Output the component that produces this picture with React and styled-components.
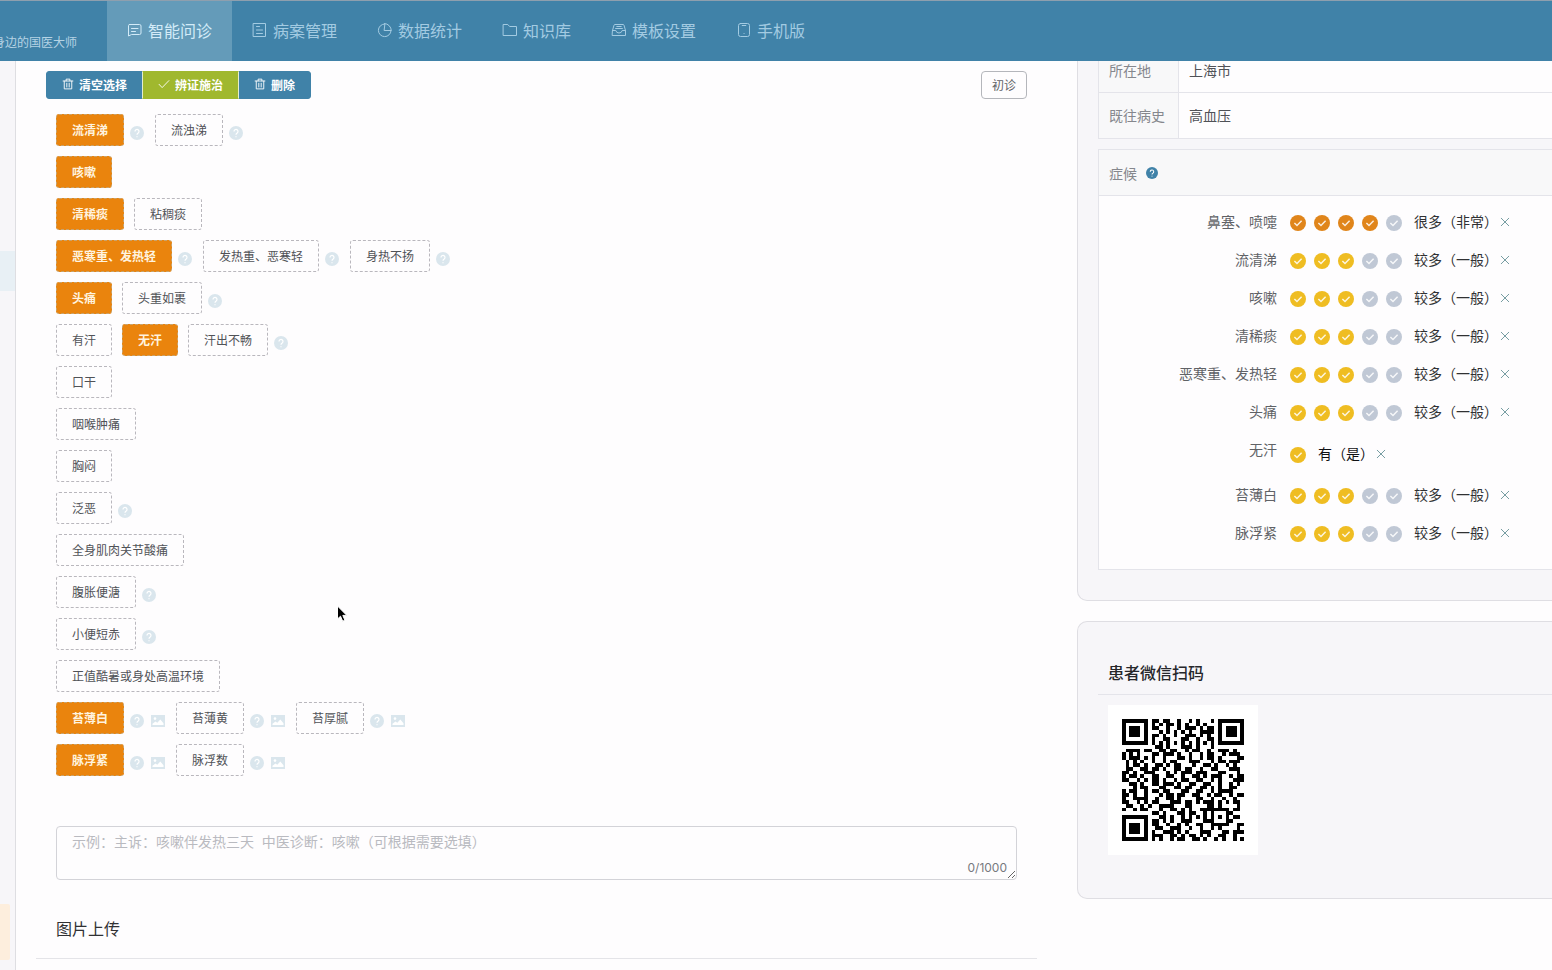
import React, { useState } from 'react';
import styled, { createGlobalStyle } from 'styled-components';

// styles
const GlobalStyle = createGlobalStyle`
  * {
    box-sizing: border-box;
  }
  body {
    margin: 0;
    background: #fefdfe;
    color: #303133;
    font-family: Inter, "Noto Sans CJK SC", sans-serif;
    font-size: 14px;
  }
  button, textarea {
    font-family: inherit;
    margin: 0;
  }
  svg {
    display: block;
    flex: none;
  }
`;

const Page = styled.div`
  position: relative;
  display: flex;
  flex-direction: column;
  min-height: 100vh;
  overflow: hidden;
`;

const Header = styled.header`
  display: flex;
  height: 61px;
  border-top: 1px solid #8e9fae;
  background: #4082a8;
`;

const Slogan = styled.div`
  display: flex;
  justify-content: flex-end;
  flex: 0 0 107px;
  min-width: 0;
  padding: 32px 30px 0 0;
  font-size: 12px;
  line-height: 20px;
  white-space: nowrap;
  color: #b5d3e4;
`;

const Nav = styled.nav`
  display: flex;
`;

const NavLink = styled.a`
  display: flex;
  align-items: center;
  gap: 5px;
  padding: 0 20px 2px;
  font-size: 16px;
  white-space: nowrap;
  text-decoration: none;
  color: ${props => (props.$active ? '#d3ebf8' : '#a3cbe2')};
  background: ${props => (props.$active ? '#649bb9' : 'transparent')};
`;

const Columns = styled.div`
  display: flex;
  flex: 1;
`;

const Sidebar = styled.aside`
  flex: 0 0 16px;
  padding-top: 190px;
  border-right: 1px solid #dedee2;
  background: #f7f6f9;
`;

const SidebarItem = styled.div`
  height: 40px;
  background: #e8f0f5;
`;

const SidebarNote = styled.div`
  height: 56px;
  margin: 613px 5px 0 0;
  border-radius: 0 2px 2px 0;
  background: #fdeedd;
`;

const Main = styled.main`
  flex: 1;
  min-width: 0;
  padding: 10px 40px 0 20px;
`;

const Toolbar = styled.div`
  display: flex;
  justify-content: space-between;
  padding: 0 10px;
`;

const ButtonGroup = styled.div`
  display: flex;
`;

const ToolButton = styled.button`
  display: flex;
  align-items: center;
  gap: 5px;
  height: 28px;
  padding: 0 15px 2px;
  border: 1px solid ${props => (props.$green ? '#a0b82e' : '#4082a8')};
  border-left-color: ${props => (props.$green ? '#e4edcf' : '#4082a8')};
  border-right-color: ${props => (props.$green ? '#e4edcf' : '#4082a8')};
  background: ${props => (props.$green ? '#a0b82e' : '#4082a8')};
  color: #fff;
  font-size: 12px;
  font-weight: 700;
  z-index: ${props => (props.$green ? 1 : 0)};
  & + & {
    margin-left: -1px;
  }
  &:first-child {
    border-radius: 3px 0 0 3px;
  }
  &:last-child {
    border-radius: 0 3px 3px 0;
  }
`;

const VisitButton = styled.button`
  height: 28px;
  padding: 0 10px 2px;
  border: 1px solid #b4b6bb;
  border-radius: 4px;
  background: transparent;
  color: #606266;
  font-size: 12px;
`;

const TagList = styled.div`
  display: flex;
  flex-direction: column;
  gap: 10px;
  padding: 15px 20px 50px;
`;

const TagRow = styled.div`
  display: flex;
  flex-wrap: wrap;
  gap: 10px;
`;

const TagItem = styled.div`
  display: flex;
  align-items: flex-end;
`;

const Tag = styled.button`
  height: 32px;
  padding: 0 15px 2px;
  border: 1px dashed ${props => (props.$on ? '#c9a26a' : '#b9b7bd')};
  border-radius: 3px;
  background: ${props => (props.$on ? '#ea840d' : '#fefdfe')};
  color: ${props => (props.$on ? '#fff3df' : '#505257')};
  font-size: 12px;
  font-weight: ${props => (props.$on ? 700 : 400)};
`;

const TagIcon = styled.span`
  width: 15px;
  margin: 0 0 6px 6px;
  color: #dae6ed;
`;

const NoteBox = styled.div`
  position: relative;
  display: flex;
  margin: 0 20px;
`;

const NoteInput = styled.textarea`
  width: 100%;
  height: 54px;
  padding: 4px 15px;
  border: 1px solid #d3d3d8;
  border-radius: 4px;
  outline: none;
  resize: vertical;
  background: transparent;
  color: #606266;
  font-size: 14px;
  line-height: 21px;
  &::placeholder {
    color: #b9bac0;
    opacity: 1;
  }
`;

const NoteCount = styled.span`
  position: absolute;
  right: 10px;
  bottom: 4px;
  font-size: 12px;
  line-height: 16px;
  color: #77797e;
`;

const UploadTitle = styled.h3`
  margin: 36px 0 0;
  padding: 0 20px 16px;
  border-bottom: 1px solid #e4e4e8;
  font-size: 16px;
  font-weight: 400;
  line-height: 26px;
  color: #303133;
`;

const Side = styled.section`
  display: flex;
  flex: 0 0 475px;
  flex-direction: column;
  gap: 20px;
  min-width: 0;
`;

const Card = styled.div`
  padding: ${props => (props.$first ? '0 0 30px 20px' : '40px 0 43px 20px')};
  border: 1px solid #dfdee3;
  border-width: ${props => (props.$first ? '0 0 1px 1px' : '1px 0 1px 1px')};
  border-radius: ${props => (props.$first ? '0 0 0 10px' : '10px 0 0 10px')};
  background: #f7f6f9;
`;

const InfoTable = styled.table`
  width: 100%;
  margin-bottom: 10px;
  border-collapse: collapse;
  border-left: 1px solid #e4e4ea;
  line-height: 20px;
  th, td {
    height: 46px;
    padding: 0 10px;
    border-bottom: 1px solid #e4e4ea;
    text-align: left;
    font-weight: 400;
  }
  th {
    width: 80px;
    border-right: 1px solid #e4e4ea;
    background: #f8f8f9;
    color: #85878d;
    white-space: nowrap;
  }
  td {
    background: #fefdfe;
    color: #505257;
  }
  tr:first-child th, tr:first-child td {
    height: 31px;
    padding-bottom: 11px;
  }
`;

const SymptomBox = styled.div`
  border: 1px solid #e4e4ea;
  border-right: none;
  background: #fefdfe;
`;

const SymptomHead = styled.div`
  display: flex;
  align-items: center;
  gap: 9px;
  height: 46px;
  padding: 0 10px;
  border-bottom: 1px solid #e4e4ea;
  background: #f8f8f9;
  color: #85878d;
`;

const HeadIcon = styled.span`
  color: #4082a8;
`;

const SymptomList = styled.ul`
  margin: 0;
  padding: 7px 0 17px;
  list-style: none;
`;

const Symptom = styled.li`
  display: flex;
  height: ${props => (props.$single ? '45px' : '38px')};
  line-height: 38px;
`;

const SymptomName = styled.span`
  width: 178px;
  text-align: right;
  color: #606266;
`;

const Rate = styled.div`
  display: flex;
  align-items: center;
  gap: 8px;
  padding: 2px 12px 0 13px;
`;

const RateButton = styled.button`
  padding: 0;
  border: none;
  background: none;
  color: ${props => props.$color};
`;

const Degree = styled.span`
  padding-top: ${props => (props.$single ? '4px' : '0')};
  color: ${props => (props.$single ? '#101114' : '#303133')};
`;

const RemoveButton = styled.button`
  display: flex;
  align-items: center;
  padding: 0 2px;
  border: none;
  background: none;
  color: #6e969c;
`;

const QrTitle = styled.h3`
  margin: 0 0 10px;
  padding: 0 10px 9px;
  border-bottom: 1px solid #e4e4ea;
  font-size: 16px;
  font-weight: 500;
  line-height: 23px;
  color: #26272b;
`;

const QrBox = styled.div`
  width: 150px;
  margin-left: 10px;
  padding: 14px;
  background: #fff;
`;

const Pointer = styled.svg`
  position: absolute;
  left: 336px;
  top: 604px;
  pointer-events: none;
`;

// icons
const LineIcon = ({ size = 16, children, width = 1 }) => (
  <svg width={size} height={size} viewBox="0 0 16 16" fill="none" stroke="currentColor" strokeWidth={width} strokeLinejoin="round" strokeLinecap="round" aria-hidden="true">
    {children}
  </svg>
);

const ChatIcon = () => (
  <LineIcon>
    <path d="M2.5 2.5h10a1.5 1.5 0 0 1 1.5 1.5v7a1.5 1.5 0 0 1-1.5 1.5H4.6L1.5 14V3.5a1 1 0 0 1 1-1z" />
    <path d="M4.5 6.5h6.5M4.5 9.5h4" />
  </LineIcon>
);

const RecordIcon = () => (
  <LineIcon>
    <path d="M1.5 1.5h12v13h-12z" />
    <path d="M4.5 4.5h3M4.5 8h6M4.5 11.5h6" />
  </LineIcon>
);

const PieIcon = () => (
  <LineIcon>
    <path d="M7.5 2A6.3 6.3 0 1 0 14 8.5H7.5z" />
    <path d="M7.5 1.5a7 7 0 0 1 6.8 7" />
  </LineIcon>
);

const FolderIcon = () => (
  <LineIcon>
    <path d="M1.5 2.5h4.3l1.8 2h6.9v9h-13z" />
  </LineIcon>
);

const BoxIcon = () => (
  <LineIcon>
    <path d="M1.5 8.5 3 3.2Q3.2 2.5 4 2.5h8q.8 0 1 .7l1.5 5.3v5h-13z" />
    <path d="M1.5 8.5h3.3q.5 2.5 3.2 2.5t3.2-2.5h3.3M5.8 4.5h4.4M4.6 6.5h6.8" />
  </LineIcon>
);

const PhoneIcon = () => (
  <LineIcon>
    <rect x="2.5" y="1.5" width="11" height="13" rx="2" />
    <path d="M6.2 3.5h3.6M8 11.5h.1" />
  </LineIcon>
);

const TrashIcon = () => (
  <LineIcon size={12} width={1.2}>
    <path d="M1.5 4h13M5.5 3.8V1.5h5v2.3M3 4.2v10.3h10V4.2M6.4 7v5M9.6 7v5" />
  </LineIcon>
);

const TickIcon = () => (
  <LineIcon size={12} width={1.2}>
    <path d="m1.5 8.5 4 4.3 9-9.3" />
  </LineIcon>
);

const CloseIcon = () => (
  <LineIcon size={10} width={1.5}>
    <path d="m2 2 12 12M14 2 2 14" />
  </LineIcon>
);

const HelpIcon = ({ size = 14 }) => (
  <svg width={size} height={size} viewBox="0 0 14 14" aria-hidden="true">
    <circle cx="7" cy="7" r="7" fill="currentColor" />
    <path d="M5 5.5a2 2 0 1 1 3.1 1.6Q7 7.7 7 8.7M7 10.2v1" fill="none" stroke="#fff" strokeWidth="1.2" />
  </svg>
);

const PhotoIcon = () => (
  <svg width="14" height="14" viewBox="0 0 14 14" aria-hidden="true">
    <path d="M0 1h14v12H0z" fill="currentColor" />
    <circle cx="4" cy="4.6" r="1.3" fill="#fff" />
    <path d="M1.5 11V9.8l3-2.4 1.8 1.4 3-3.3 3.2 3.7V11z" fill="#fff" />
  </svg>
);

const CheckDot = () => (
  <svg width="16" height="16" viewBox="0 0 16 16" aria-hidden="true">
    <circle cx="8" cy="8" r="8" fill="currentColor" />
    <path d="m4.4 8 2.6 2.5 4.6-4.7" fill="none" stroke="#fff" strokeOpacity=".85" strokeWidth="1.5" />
  </svg>
);

// data
const navItems = [
  { label: '智能问诊', icon: ChatIcon, active: true },
  { label: '病案管理', icon: RecordIcon },
  { label: '数据统计', icon: PieIcon },
  { label: '知识库', icon: FolderIcon },
  { label: '模板设置', icon: BoxIcon },
  { label: '手机版', icon: PhoneIcon }
];

const tagRows = [
  [{ name: '流清涕', help: true }, { name: '流浊涕', help: true }],
  [{ name: '咳嗽' }],
  [{ name: '清稀痰' }, { name: '粘稠痰' }],
  [{ name: '恶寒重、发热轻', help: true }, { name: '发热重、恶寒轻', help: true }, { name: '身热不扬', help: true }],
  [{ name: '头痛' }, { name: '头重如裹', help: true }],
  [{ name: '有汗' }, { name: '无汗' }, { name: '汗出不畅', help: true }],
  [{ name: '口干' }],
  [{ name: '咽喉肿痛' }],
  [{ name: '胸闷' }],
  [{ name: '泛恶', help: true }],
  [{ name: '全身肌肉关节酸痛' }],
  [{ name: '腹胀便溏', help: true }],
  [{ name: '小便短赤', help: true }],
  [{ name: '正值酷暑或身处高温环境' }],
  [{ name: '苔薄白', help: true, photo: true }, { name: '苔薄黄', help: true, photo: true }, { name: '苔厚腻', help: true, photo: true }],
  [{ name: '脉浮紧', help: true, photo: true }, { name: '脉浮数', help: true, photo: true }]
];

const symptoms = [
  { name: '鼻塞、喷嚏', rate: 4, max: 5, text: '很多（非常）' },
  { name: '流清涕', rate: 3, max: 5, text: '较多（一般）' },
  { name: '咳嗽', rate: 3, max: 5, text: '较多（一般）' },
  { name: '清稀痰', rate: 3, max: 5, text: '较多（一般）' },
  { name: '恶寒重、发热轻', rate: 3, max: 5, text: '较多（一般）' },
  { name: '头痛', rate: 3, max: 5, text: '较多（一般）' },
  { name: '无汗', rate: 1, max: 1, text: '有（是）' },
  { name: '苔薄白', rate: 3, max: 5, text: '较多（一般）' },
  { name: '脉浮紧', rate: 3, max: 5, text: '较多（一般）' }
];

const qrRows = [
  '#######.##.##..#..#.#...#.#######',
  '#.....#.#.#.##.#.#..#.#...#.....#',
  '#.###.#.##..#..#.###.#.##.#.###.#',
  '#.###.#...#.#.#.#.#..####.#.###.#',
  '#.###.#.##.#..#..###.#.#..#.###.#',
  '#.....#.#..##...##..#..##.#.....#',
  '#######.#.#.#.#.#.#.#.#.#.#######',
  '.........##.#...###.#...#........',
  '.####.##..##.##..#.##..#..###.#..',
  '#.#.#...##.###.#..#..#.##..#.###.',
  '#.###.#.#..#...##.#..#.##.#....##',
  '.#.#.#..#..#.##...###...#.##.###.',
  '.#.##.#..##.#.##...#..##.#..#.#..',
  '.##..##.##.#..##.##..#..##...###.',
  '##.#..###...#.#.###.###...##...#.',
  '#.##.#..##..##..#..##.#.###..#.##',
  '##..#.#.##.#..#.##..##..#.#...###',
  '..##.#..##.###.#..##..##..#..#.#.',
  '...#.##...##..##.##..##.#.#..##..',
  '#.##..#.##.##...##..##..#.####...',
  '##.#..#...#.##.##..##..#.##..#.##',
  '#..####..#..##.#....##..#..#..#..',
  '##..#.#.##...###.##.#.###.#.#.##.',
  '.##..#.#..####...##....##.#....#.',
  '#..#.##...#..##.#.#..########.##.',
  '........##.#...##.##..#.#...##...',
  '#######...##.#..#.#.#.#.#.#.#.##.',
  '#.....#.##.#.#..###...###...##...',
  '#.###.#.##..#..#.#..##..#####..##',
  '#.###.#..##..###..#..#..#.#....#.',
  '#.###.#.#..###.#.#...###...##.###',
  '#.....#.###..##.#.##.#.#..##..#..',
  '#######.#.#..#.##..##.#..#.#..#.#'
];

const QrCode = () => (
  <svg width="122" height="122" viewBox="0 0 33 33" shapeRendering="crispEdges" role="img" aria-label="患者微信扫码">
    <path
      d={qrRows.map((row, y) => [...row].map((c, x) => (c === '#' ? `M${x} ${y}h1v1h-1z` : '')).join('')).join('')}
      fill="#000"
    />
  </svg>
);

const dotColor = (index, rate) => {
  if (index >= rate) return '#c0c8d5';
  return rate > 3 ? '#e0851b' : '#efbd22';
};

// component
const App = () => {
  const [selected, setSelected] = useState(['流清涕', '咳嗽', '清稀痰', '恶寒重、发热轻', '头痛', '无汗', '苔薄白', '脉浮紧']);
  const [note, setNote] = useState('');

  const toggle = (name) => {
    setSelected(selected.includes(name) ? selected.filter(n => n !== name) : [...selected, name]);
  };

  return (
    <Page>
      <GlobalStyle />
      <Header>
        <Slogan>身边的国医大师</Slogan>
        <Nav>
          {navItems.map(({ label, icon: Icon, active }) => (
            <NavLink key={label} href="#" $active={active}>
              <Icon />
              {label}
            </NavLink>
          ))}
        </Nav>
      </Header>
      <Columns>
        <Sidebar>
          <SidebarItem />
          <SidebarNote />
        </Sidebar>
        <Main>
          <Toolbar>
            <ButtonGroup>
              <ToolButton type="button" onClick={() => setSelected([])}><TrashIcon />清空选择</ToolButton>
              <ToolButton type="button" $green><TickIcon />辨证施治</ToolButton>
              <ToolButton type="button"><TrashIcon />删除</ToolButton>
            </ButtonGroup>
            <VisitButton type="button">初诊</VisitButton>
          </Toolbar>
          <TagList>
            {tagRows.map(row => (
              <TagRow key={row[0].name}>
                {row.map(({ name, help, photo }) => (
                  <TagItem key={name}>
                    <Tag type="button" $on={selected.includes(name)} aria-pressed={selected.includes(name)} onClick={() => toggle(name)}>
                      {name}
                    </Tag>
                    {help && <TagIcon><HelpIcon /></TagIcon>}
                    {photo && <TagIcon><PhotoIcon /></TagIcon>}
                  </TagItem>
                ))}
              </TagRow>
            ))}
          </TagList>
          <NoteBox>
            <NoteInput
              aria-label="主诉"
              maxLength={1000}
              placeholder="示例：主诉：咳嗽伴发热三天  中医诊断：咳嗽（可根据需要选填）"
              value={note}
              onChange={e => setNote(e.target.value)}
            />
            <NoteCount>{note.length}/1000</NoteCount>
          </NoteBox>
          <UploadTitle>图片上传</UploadTitle>
        </Main>
        <Side>
          <Card $first>
            <InfoTable>
              <tbody>
                <tr>
                  <th scope="row">所在地</th>
                  <td>上海市</td>
                </tr>
                <tr>
                  <th scope="row">既往病史</th>
                  <td>高血压</td>
                </tr>
              </tbody>
            </InfoTable>
            <SymptomBox>
              <SymptomHead>
                症候
                <HeadIcon><HelpIcon size={12} /></HeadIcon>
              </SymptomHead>
              <SymptomList>
                {symptoms.map(({ name, rate, max, text }) => (
                  <Symptom key={name} $single={max === 1}>
                    <SymptomName>{name}</SymptomName>
                    <Rate>
                      {Array.from({ length: max }, (_, i) => (
                        <RateButton key={i} type="button" aria-label={`${name} ${i + 1}`} $color={dotColor(i, rate)}>
                          <CheckDot />
                        </RateButton>
                      ))}
                    </Rate>
                    <Degree $single={max === 1}>{text}</Degree>
                    <RemoveButton type="button" aria-label={`删除 ${name}`}><CloseIcon /></RemoveButton>
                  </Symptom>
                ))}
              </SymptomList>
            </SymptomBox>
          </Card>
          <Card>
            <QrTitle>患者微信扫码</QrTitle>
            <QrBox><QrCode /></QrBox>
          </Card>
        </Side>
      </Columns>
      <Pointer width="12" height="20" viewBox="0 0 12 20" aria-hidden="true">
        <path d="M1.5 2v13l3-2.8 2.2 5 2.2-1-2.1-4.8h4z" fill="#000" stroke="#fff" strokeWidth="1" />
      </Pointer>
    </Page>
  );
};

export default App;
